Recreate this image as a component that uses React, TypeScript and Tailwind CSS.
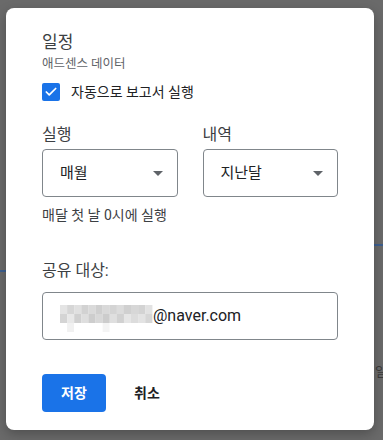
import {Check} from "lucide-react";

const font = {fontFamily: 'Roboto, "Noto Sans CJK KR", sans-serif'};

// pixelated (mosaic) part of the e-mail address
const mosaic: string[][] = [
    ['#e4e4e4', '#d6d6d6', '#e0e0e0', '#d2d2d2', '#dadada', '#cfcfcf', '#d9d9d9', '#d4d4d4', '#dcdcdc', '#d0d0d0', '#d7d7d7', '#d3d3d3', '#e2e2e2'],
    ['#d4d4d4', '#e8e8e8', '#d0d0d0', '#dedede', '#cdcdcd', '#d8d8d8', '#cccccc', '#dfdfdf', '#d1d1d1', '#e6e6e6', '#dcdcdc', '#e3e3e3', '#d6d6d6'],
    ['#ffffff', '#f1f1f1', '#ffffff', '#ffffff', '#ffffff', '#ffffff', '#f4f4f4', '#ffffff', '#ffffff', '#ffffff', '#ffffff', '#ffffff', '#ffffff'],
];

function Select({label, value}: {label: string, value: string}) {
    return (
        <div className="flex flex-col gap-[3px]">
            <span className="text-[16px] leading-[22px] text-[#3c4043]">{label}</span>
            <div className="flex h-[48px] items-center justify-between rounded-[4px] border border-[#80868b] pl-[17px] pr-[14px]">
                <span className="text-[15px] text-[#202124]">{value}</span>
                <svg width="10" height="5" viewBox="0 0 10 5">
                    <path d="M0 0 L10 0 L5 5 Z" fill="#5f6368" />
                </svg>
            </div>
        </div>
    );
}

export default function App() {
    return (
        <div className="relative h-[440px] w-[383px] overflow-hidden bg-[#6a6a6a] pl-[6px] pt-[8px]" style={font}>
            {/* bits of the page behind the overlay */}
            <div className="absolute left-0 top-[270px] h-[2px] w-[8px] bg-[#3d5f8f]" />
            <div className="absolute right-0 top-[244px] h-[2px] w-[10px] bg-[#3d5f8f]" />
            <span className="absolute left-[375px] top-[362px] text-[13px] text-[#3a3a3a]">일</span>

            {/* dialog */}
            <div className="relative flex h-[422px] w-[368px] flex-col rounded-[8px] bg-white px-[36px] pt-[22px] shadow-[0_4px_12px_rgba(0,0,0,0.25)]">
                <div className="text-[17px] leading-[24px] text-[#3c4043]">일정</div>
                <div className="mt-[2px] text-[12.5px] leading-[16px] text-[#5f6368]">애드센스 데이터</div>

                <label className="mt-[10px] flex h-[20px] items-center gap-[11px]">
                    <span className="flex h-[18px] w-[18px] items-center justify-center rounded-[2px] bg-[#1a73e8]">
                        <Check className="h-[14px] w-[14px] text-white" strokeWidth={3} />
                    </span>
                    <span className="text-[14px] text-[#202124]">자동으로 보고서 실행</span>
                </label>

                <div className="mt-[22px] grid grid-cols-2 gap-[25px]">
                    <Select label="실행" value="매월" />
                    <Select label="내역" value="지난달" />
                </div>

                <div className="mt-[8px] text-[14px] leading-[20px] text-[#3c4043]">매달 첫 날 0시에 실행</div>

                <div className="mt-[35px] text-[16px] leading-[22px] text-[#3c4043]">공유 대상:</div>
                <div className="mt-[10px] flex h-[48px] items-center rounded-[4px] border border-[#80868b] pl-[17px]">
                    <svg width="93" height="27" viewBox="0 0 93 27" className="mt-[4px]">
                        {mosaic.map((row, r) =>
                            row.map((c, i) => (
                                <rect key={`${r}-${i}`} x={i * 7.1} y={r * 9} width="7.2" height="9" fill={c} />
                            ))
                        )}
                    </svg>
                    <span className="text-[16px] text-[#202124]">@naver.com</span>
                </div>

                <div className="mt-[34px] flex items-center gap-[28px]">
                    <button className="h-[38px] w-[64px] rounded-[4px] bg-[#1a73e8] text-[14px] font-bold text-white">
                        저장
                    </button>
                    <button className="text-[14px] font-bold text-[#202124]">취소</button>
                </div>
            </div>
        </div>
    );
}
